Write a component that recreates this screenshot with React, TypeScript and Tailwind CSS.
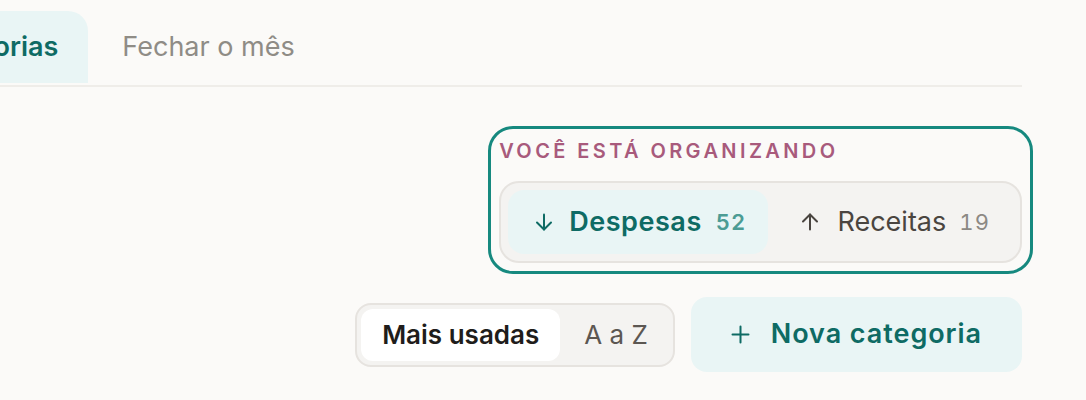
const font = { fontFamily: 'Inter, "Noto Sans", sans-serif' };

function ArrowIcon({ dir }: { dir: 'up' | 'down' }) {
  return (
    <svg width="18" height="18" viewBox="0 0 18 18" fill="none" stroke="currentColor" strokeWidth="2" strokeLinecap="round" strokeLinejoin="round">
      {dir === 'down' ? (
        <>
          <path d="M9 1.5v15" />
          <path d="M2 9.5l7 7 7-7" />
        </>
      ) : (
        <>
          <path d="M9 16.5v-15" />
          <path d="M2 8.5l7-7 7 7" />
        </>
      )}
    </svg>
  );
}

export default function App() {
  return (
    <div className="min-h-screen overflow-hidden bg-[#fbfaf8] pr-[64px]" style={font}>
      {/* abas */}
      <div className="border-b-2 border-[#efede9] pb-[2px] pt-[11px]">
        <nav className="-ml-[114px] flex gap-[4px]">
          <button className="h-[72px] rounded-t-[20px] bg-[#e9f5f5] px-[30px] text-[27px] font-semibold text-[#0e6b64]">
            Categorias
          </button>
          <button className="h-[72px] px-[30px] text-[27px] text-[#8f8c86]">Fechar o mês</button>
        </nav>
      </div>

      <div className="flex flex-col items-end">
        {/* tipo */}
        <div className="mt-[50px] w-fit rounded-[14px] outline-[3px] outline-offset-[8px] outline-[#16897f] outline-solid">
          <div className="h-[44px] text-[20px] font-semibold uppercase leading-[28px] tracking-[0.17em] text-[#a85a7c]">
            Você está organizando
          </div>
          <div className="flex gap-[8px] rounded-[20px] border-2 border-[#e6e3df] bg-[#f4f3f1] p-[7px]">
            <button className="flex h-[64px] items-center rounded-[16px] bg-[#e9f5f5] pl-[27px] pr-[22px] text-[#0e6b64]">
              <ArrowIcon dir="down" />
              <span className="ml-[16px] text-[27px] font-semibold tracking-[0.02em]">Despesas</span>
              <span className="ml-[14px] text-[22px] font-semibold tracking-[0.05em] tabular-nums text-[#4c9c94]">52</span>
            </button>
            <button className="flex h-[64px] items-center rounded-[16px] pl-[25px] pr-[23px] text-[#4a4540]">
              <ArrowIcon dir="up" />
              <span className="ml-[18px] text-[27px]">Receitas</span>
              <span className="ml-[13px] text-[22px] tracking-[0.05em] tabular-nums text-[#8c8984]">19</span>
            </button>
          </div>
        </div>

        {/* ordenar + nova */}
        <div className="mt-[34px] flex items-center gap-[16px]">
          <div className="flex h-[64px] items-stretch rounded-[16px] border-2 border-[#e6e3df] bg-[#f4f3f1] p-[4px]">
            <button className="rounded-[12px] bg-white px-[21px] text-[26px] font-semibold text-[#1f1d1b]">Mais usadas</button>
            <button className="pl-[24px] pr-[21px] text-[26px] text-[#5c5752]">A a Z</button>
          </div>
          <button className="flex h-[75px] items-center gap-[21px] rounded-[16px] bg-[#e9f5f5] px-[40px] text-[#0e6b64]">
            <svg width="19" height="19" viewBox="0 0 19 19" fill="none" stroke="currentColor" strokeWidth="2" strokeLinecap="round">
              <path d="M9.5 1.5v16M1.5 9.5h16" />
            </svg>
            <span className="text-[27px] font-semibold tracking-[0.035em]">Nova categoria</span>
          </button>
        </div>
      </div>
    </div>
  );
}
